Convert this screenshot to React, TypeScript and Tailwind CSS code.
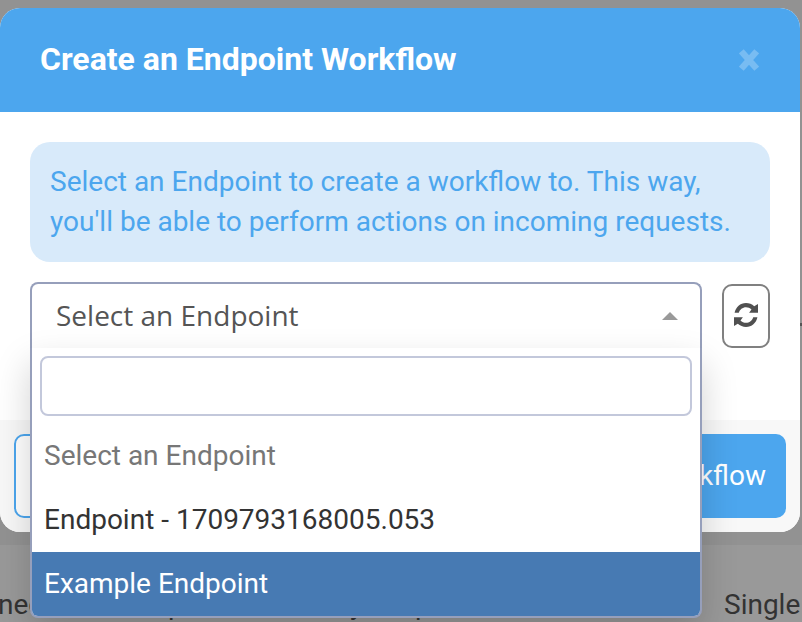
const options = [
  { label: 'Select an Endpoint', style: 'text-[#777777]' },
  { label: 'Endpoint - 1709793168005.053', style: 'text-[#333333]' },
  { label: 'Example Endpoint', style: 'bg-[#477ab3] text-white' },
];

function CloseIcon() {
  return (
    <svg viewBox="0 0 20 22" className="h-[22px] w-5 text-[#78bcf2]" stroke="currentColor" strokeWidth="6.4">
      <path d="M2.3 2.3 17.7 19.7M17.7 2.3 2.3 19.7" />
    </svg>
  );
}

function RefreshIcon() {
  const arrow = 'M.6 9.8C1.7 4.2 6.3 0 12 0c3.1 0 6 1.2 8.2 3.2L24 1v8.8h-8.900l2.400-3.200C16 5 14.100 4.200 12 4.200c-3.400 0-6.300 2.300-7.200 5.600Z';
  return (
    <svg viewBox="0 0 24 24" className="size-6 text-[#505050]" fill="currentColor">
      <path d={arrow} />
      <path d={arrow} transform="rotate(180 12 12)" />
    </svg>
  );
}

function Backdrop() {
  return (
    <div className="flex h-[622px] flex-col overflow-hidden bg-[#929292]">
      <div className="flex h-[545px] shrink-0 flex-col items-end">
        <div className="mt-[323px] h-[3px] w-[2px] bg-[#555555]" />
      </div>
      <div className="relative h-[77px] bg-[#999999] text-[28px] leading-[40px] text-[#333333]">
        <span className="absolute top-[40px] left-[-2px]">nec</span>
        <span className="absolute top-[40px] left-[168px]">p</span>
        <span className="absolute top-[40px] left-[350px]">y</span>
        <span className="absolute top-[40px] left-[415px]">p</span>
        <span className="absolute top-[40px] left-[724px]">Single</span>
      </div>
    </div>
  );
}

function Dropdown() {
  return (
    <div className="absolute top-[66px] left-0 h-[270px] w-[672px] rounded-b-[8px] border-2 border-t-0 border-[#969fbb] bg-white shadow-[0_16px_36px_rgba(0,0,0,0.18)]">
      <div className="px-2 pt-2">
        <input className="block h-[60px] w-full rounded-[8px] border-2 border-[#c3c8db] bg-white outline-none" />
      </div>
      <ul className="mt-2 overflow-hidden rounded-b-[6px]">
        {options.map((o) => (
          <li key={o.label} className={`h-16 px-3 text-[28px] leading-[64px] ${o.style}`}>
            {o.label}
          </li>
        ))}
      </ul>
    </div>
  );
}

export default function App() {
  return (
    <div className="relative h-[622px] w-[802px] overflow-hidden font-['Roboto',sans-serif]">
      <Backdrop />
      <div className="absolute top-2 left-0 flex h-[524px] w-[800px] flex-col rounded-[20px] bg-white">
        <header className="flex h-[104px] items-center justify-between rounded-t-[20px] bg-[#4ca6ee] pr-[41px] pl-10">
          <h1 className="pb-[2px] text-[32px] leading-[40px] font-bold text-white">Create an Endpoint Workflow</h1>
          <CloseIcon />
        </header>
        <main className="flex h-[308px] flex-col gap-5 px-[30px] pt-[30px]">
          <p className="h-[120px] shrink-0 rounded-[20px] bg-[#d8eafa] px-5 pt-5 text-[28px] leading-[40px] whitespace-nowrap text-[#4ca6ee]">
            Select an Endpoint to create a workflow to. This way,
            <br />
            you'll be able to perform actions on incoming requests.
          </p>
          <div className="flex gap-5">
            <div className="relative z-10 h-[66px] w-[672px]">
              <div className="flex h-[66px] items-center justify-between rounded-t-[8px] border-2 border-b-0 border-[#969fbb] bg-white pr-[22px] pl-6">
                <span className="pb-[2px] font-['Open_Sans',sans-serif] text-[28px] leading-[40px] text-[#555555]">Select an Endpoint</span>
                <span className="size-0 border-x-8 border-b-8 border-x-transparent border-b-[#999999]" />
              </div>
              <Dropdown />
            </div>
            <button className="mt-[2px] flex h-16 w-12 items-center justify-center rounded-[10px] border-2 border-[#808080] bg-white pb-[2px]">
              <RefreshIcon />
            </button>
          </div>
        </main>
        <footer className="flex h-[112px] items-start justify-between rounded-b-[20px] bg-[#f8f8f8] p-[14px]">
          <button aria-label="Close" className="h-[84px] w-[150px] rounded-[10px] border-2 border-[#4ca6ee] bg-white" />
          <button className="h-[84px] rounded-[10px] bg-[#4ca6ee] px-5 text-[28px] text-white">Create Workflow</button>
        </footer>
      </div>
    </div>
  );
}
